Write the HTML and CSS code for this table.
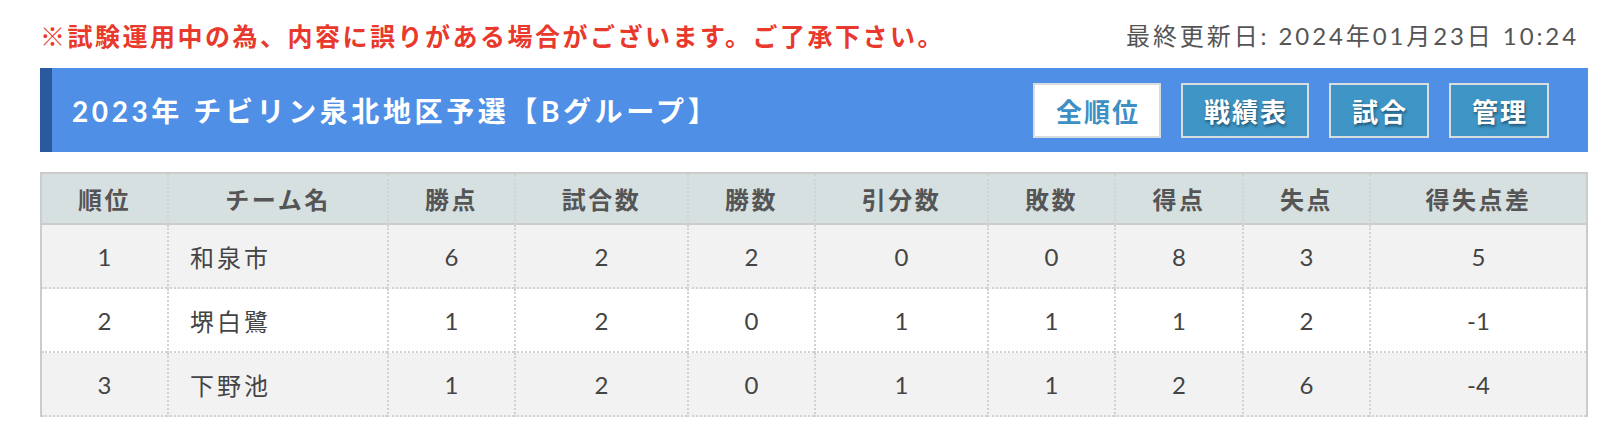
FILE: index.html
```html
<!DOCTYPE html>
<html lang="ja">
<head>
<meta charset="utf-8">
<title>2023年 チビリン泉北地区予選【Bグループ】</title>
<link rel="stylesheet" href="styles.css">
</head>
<body>
<div class="page">
  <div class="topline">
    <p class="notice">※試験運用中の為、内容に誤りがある場合がございます。ご了承下さい。</p>
    <p class="updated">最終更新日: 2024年01月23日 10:24</p>
  </div>
  <div class="titlebar">
    <h1 class="title">2023年 チビリン泉北地区予選【Bグループ】</h1>
    <nav class="tabs">
      <a class="tab tab-active">全順位</a>
      <a class="tab">戦績表</a>
      <a class="tab">試合</a>
      <a class="tab">管理</a>
    </nav>
  </div>
  <table class="standings">
    <colgroup>
      <col class="w-s1"><col class="w-name"><col class="w-s"><col class="w-m"><col class="w-s"><col class="w-m"><col class="w-s"><col class="w-s8"><col class="w-s"><col class="w-last">
    </colgroup>
    <thead>
      <tr><th>順位</th><th>チーム名</th><th>勝点</th><th>試合数</th><th>勝数</th><th>引分数</th><th>敗数</th><th>得点</th><th>失点</th><th>得失点差</th></tr>
    </thead>
    <tbody>
      <tr class="odd"><td>1</td><td class="name">和泉市</td><td>6</td><td>2</td><td>2</td><td>0</td><td>0</td><td>8</td><td>3</td><td>5</td></tr>
      <tr class="even"><td>2</td><td class="name">堺白鷺</td><td>1</td><td>2</td><td>0</td><td>1</td><td>1</td><td>1</td><td>2</td><td>-1</td></tr>
      <tr class="odd"><td>3</td><td class="name">下野池</td><td>1</td><td>2</td><td>0</td><td>1</td><td>1</td><td>2</td><td>6</td><td>-4</td></tr>
    </tbody>
  </table>
</div>
</body>
</html>
```

FILE: styles.css
```css
html, body {
  margin: 0;
  padding: 0;
  background: #fff;
}
body {
  font-family: "Lato", "Noto Sans CJK JP", sans-serif;
  color: #444;
}
.page {
  width: 1548px;
  margin-left: 40px;
}
.topline {
  display: flex;
  justify-content: space-between;
  align-items: center;
  height: 68px;
}
.notice {
  margin: 0;
  color: #e8392c;
  font-weight: bold;
  font-size: 25px;
  letter-spacing: 2.5px;
  padding-top: 2px;
}
.updated {
  margin: 0 9px 0 0;
  color: #555;
  font-size: 24px;
  letter-spacing: 2.9px;
}
.titlebar {
  display: flex;
  align-items: center;
  justify-content: space-between;
  height: 84px;
  background: #4f8fe6;
  border-left: 12px solid #2a5a9e;
  padding: 0 39px 0 20px;
}
.title {
  margin: 0;
  color: #fff;
  font-size: 28px;
  font-weight: bold;
  letter-spacing: 3.6px;
}
.tabs {
  display: flex;
  gap: 20px;
}
.tab {
  display: flex;
  align-items: center;
  justify-content: center;
  height: 51px;
  padding: 0 19px 0 21px;
  background: #3f96c6;
  border: 2px solid #d9dde0;
  color: #fff;
  font-size: 26px;
  font-weight: bold;
  letter-spacing: 2px;
  text-shadow: 1px 2px 3px rgba(0, 0, 0, 0.45);
}
.tab-active {
  background: #fff;
  color: #3d8fc4;
  text-shadow: none;
}
.standings {
  margin-top: 20px;
  width: 1548px;
  table-layout: fixed;
  border-collapse: separate;
  border-spacing: 0;
  border-top: 2px solid #ccc;
  border-left: 2px solid #ccc;
  border-right: 2px solid #ccc;
}
.w-s1 { width: 125px; }
.w-name { width: 220px; }
.w-s { width: 127px; }
.w-s8 { width: 128px; }
.w-m { width: 173px; }
.w-last { width: 217px; }
.standings th,
.standings td {
  text-align: center;
  padding: 0;
  border-left: 2px dotted #d2d2d2;
}
.standings th:first-child,
.standings td:first-child {
  border-left: none;
}
.standings th {
  height: 49px;
  background: #d6e0e1;
  color: #555;
  font-size: 24px;
  font-weight: bold;
  letter-spacing: 2.5px;
  border-bottom: 2px solid #ccc;
}
.standings td {
  height: 62px;
  font-size: 24px;
  color: #444;
  border-bottom: 2px dotted #d2d2d2;
}
.standings td.name {
  text-align: left;
  padding-left: 21px;
  letter-spacing: 3px;
}
.standings tr.odd td { background: #f2f2f2; }
.standings tr.even td { background: #fff; }
```
